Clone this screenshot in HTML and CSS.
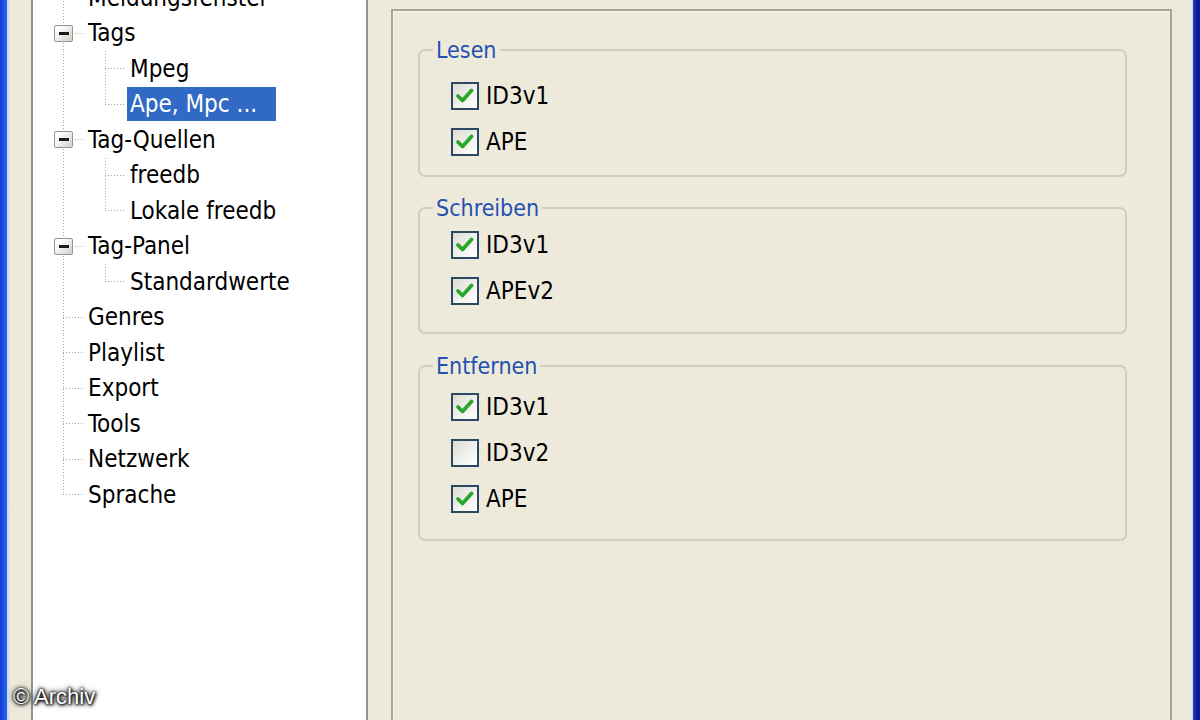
FILE: index.html
```html
<!DOCTYPE html>
<html lang="de">
<head>
<meta charset="utf-8">
<title>Optionen – Tags</title>
<link rel="stylesheet" href="styles.css">
</head>
<body>
<div class="window">
  <div class="edge-left"></div>
  <div class="edge-left-hl"></div>

  <div class="tree">
    <ul class="tree-list">
      <li class="row"><span class="cell tee"></span><span class="label">Meldungsfenster</span></li>
      <li class="row"><span class="cell tee"><span class="exp"></span></span><span class="label">Tags</span></li>
      <li class="row"><span class="cell pipe"></span><span class="cell tee"></span><span class="label">Mpeg</span></li>
      <li class="row"><span class="cell pipe"></span><span class="cell end"></span><span class="label selected">Ape, Mpc ...</span></li>
      <li class="row"><span class="cell tee"><span class="exp"></span></span><span class="label">Tag-Quellen</span></li>
      <li class="row"><span class="cell pipe"></span><span class="cell tee"></span><span class="label">freedb</span></li>
      <li class="row"><span class="cell pipe"></span><span class="cell end"></span><span class="label">Lokale freedb</span></li>
      <li class="row"><span class="cell tee"><span class="exp"></span></span><span class="label">Tag-Panel</span></li>
      <li class="row"><span class="cell pipe"></span><span class="cell end"></span><span class="label">Standardwerte</span></li>
      <li class="row"><span class="cell tee"></span><span class="label">Genres</span></li>
      <li class="row"><span class="cell tee"></span><span class="label">Playlist</span></li>
      <li class="row"><span class="cell tee"></span><span class="label">Export</span></li>
      <li class="row"><span class="cell tee"></span><span class="label">Tools</span></li>
      <li class="row"><span class="cell tee"></span><span class="label">Netzwerk</span></li>
      <li class="row"><span class="cell end"></span><span class="label">Sprache</span></li>
    </ul>
  </div>

  <div class="panel">
    <fieldset class="group group-lesen">
      <legend>Lesen</legend>
      <div class="items">
        <label class="item"><span class="check on"><svg viewBox="0 0 24 24"><polyline points="5,12 9.5,16.5 18.5,6.5"/></svg></span>ID3v1</label>
        <label class="item"><span class="check on"><svg viewBox="0 0 24 24"><polyline points="5,12 9.5,16.5 18.5,6.5"/></svg></span>APE</label>
      </div>
    </fieldset>

    <fieldset class="group group-schreiben">
      <legend>Schreiben</legend>
      <div class="items">
        <label class="item"><span class="check on"><svg viewBox="0 0 24 24"><polyline points="5,12 9.5,16.5 18.5,6.5"/></svg></span>ID3v1</label>
        <label class="item"><span class="check on"><svg viewBox="0 0 24 24"><polyline points="5,12 9.5,16.5 18.5,6.5"/></svg></span>APEv2</label>
      </div>
    </fieldset>

    <fieldset class="group group-entfernen">
      <legend>Entfernen</legend>
      <div class="items">
        <label class="item"><span class="check on"><svg viewBox="0 0 24 24"><polyline points="5,12 9.5,16.5 18.5,6.5"/></svg></span>ID3v1</label>
        <label class="item"><span class="check"></span>ID3v2</label>
        <label class="item"><span class="check on"><svg viewBox="0 0 24 24"><polyline points="5,12 9.5,16.5 18.5,6.5"/></svg></span>APE</label>
      </div>
    </fieldset>
  </div>

  <div class="edge-right-pad"></div>
  <div class="edge-right-hl"></div>
  <div class="edge-right"></div>

  <div class="watermark">© Archiv</div>
</div>
</body>
</html>
```

FILE: styles.css
```css
html, body {
  margin: 0;
  padding: 0;
}

body {
  background: #eeeadb;
  font-family: "DejaVu Sans", "Noto Sans", sans-serif;
  font-stretch: condensed;
  font-size: 24px;
  color: #000;
}

.window {
  position: relative;
  display: flex;
  height: 720px;
  overflow: hidden;
  background: #eeeadb;
}

/* window frame edges */
.edge-left {
  width: 7px;
  flex: none;
  background: linear-gradient(to right, #0a3ccf, #1a55e6 60%, #2f68ee);
}
.edge-left-hl {
  width: 3px;
  flex: none;
  background: linear-gradient(to right, #c9d5ef, #e6e6e2);
}
.edge-right-pad {
  width: 19px;
  flex: none;
}
.edge-right-hl {
  width: 2px;
  flex: none;
  background: linear-gradient(to right, #f4f6f3, #b9d6f2);
}
.edge-right {
  width: 7px;
  flex: none;
  background: linear-gradient(to right, #2a45c6, #0d1ea0 50%, #0a1890);
}

/* tree view */
.tree {
  width: 333px;
  flex: none;
  margin-left: 21px;
  background: #fff;
  border-left: 2px solid #8d949b;
  border-right: 2px solid #8d949b;
  overflow: hidden;
}

.tree-list {
  list-style: none;
  margin: -20px 0 0 0;
  padding: 0 0 0 9px;
}

.row {
  display: flex;
  align-items: center;
  height: 35.5px;
}

.cell {
  width: 42px;
  height: 100%;
  flex: none;
  display: flex;
  align-items: center;
  justify-content: center;
  background-repeat: no-repeat;
}

.pipe {
  background-image: repeating-linear-gradient(to bottom, #a3a3a3 0 1px, transparent 1px 3px);
  background-size: 1px 100%;
  background-position: 21px 0;
}

.tee {
  background-image:
    repeating-linear-gradient(to bottom, #a3a3a3 0 1px, transparent 1px 3px),
    repeating-linear-gradient(to right, #a3a3a3 0 1px, transparent 1px 3px);
  background-size: 1px 100%, 21px 1px;
  background-position: 21px 0, 21px 50%;
}

.end {
  background-image:
    repeating-linear-gradient(to bottom, #a3a3a3 0 1px, transparent 1px 3px),
    repeating-linear-gradient(to right, #a3a3a3 0 1px, transparent 1px 3px);
  background-size: 1px 50%, 21px 1px;
  background-position: 21px 0, 21px 50%;
}

.exp {
  width: 19px;
  height: 17px;
  box-sizing: border-box;
  border: 1px solid #8e979c;
  border-radius: 2px;
  background: linear-gradient(135deg, #ffffff 20%, #d2cfc4 100%);
  display: flex;
  align-items: center;
  justify-content: center;
  margin-left: 1px;
}
.exp::before {
  content: "";
  width: 10px;
  height: 3px;
  background: #1a1a1a;
}

.label {
  margin-left: 1px;
  padding: 0 3px;
  line-height: 34px;
  white-space: nowrap;
}

.selected {
  background: #316ac5;
  color: #fff;
  padding-right: 19px;
}

/* right panel */
.panel {
  width: 781px;
  flex: none;
  box-sizing: border-box;
  margin-left: 23px;
  margin-top: 9px;
  border: 2px solid #a9a594;
  border-bottom: none;
  box-shadow: inset 1px 1px 0 #f7f5ec;
  padding: 27px 0 0 25px;
}

.group {
  width: 709px;
  box-sizing: border-box;
  margin: 0;
  padding: 0;
  min-width: 0;
  border: 2px solid #d2cebd;
  border-radius: 7px;
}

.group legend {
  margin-left: 13px;
  padding: 0 3px;
  line-height: 24px;
  font-size: 23px;
  color: #2351b2;
}

.items {
  padding-left: 31px;
}

.group-lesen .items { padding-top: 11px; padding-bottom: 10px; }
.group-schreiben { margin-top: 19px; }
.group-schreiben .items { padding-top: 2px; padding-bottom: 18px; }
.group-entfernen { margin-top: 20px; }
.group-entfernen .items { padding-top: 6px; padding-bottom: 17px; }

.item {
  display: flex;
  align-items: center;
  gap: 7px;
  height: 46px;
}

.check {
  width: 28px;
  height: 28px;
  box-sizing: border-box;
  flex: none;
  border: 2px solid #2c4862;
  background: linear-gradient(135deg, #dcdcd4 0%, #f2f3ee 60%, #ffffff 100%);
  display: flex;
}

.check svg {
  width: 24px;
  height: 24px;
}

.check polyline {
  fill: none;
  stroke: #2aa62a;
  stroke-width: 3.8;
  stroke-linecap: round;
  stroke-linejoin: round;
}

/* watermark overlay */
.watermark {
  position: absolute;
  left: 13px;
  top: 684px;
  font-family: "Liberation Sans", Arial, sans-serif;
  font-stretch: normal;
  font-size: 22px;
  color: #fff;
  text-shadow: 0 0 2px #000, 0 0 4px #000, 0 0 6px #333, 1px 1px 3px #000;
  white-space: nowrap;
}
```
